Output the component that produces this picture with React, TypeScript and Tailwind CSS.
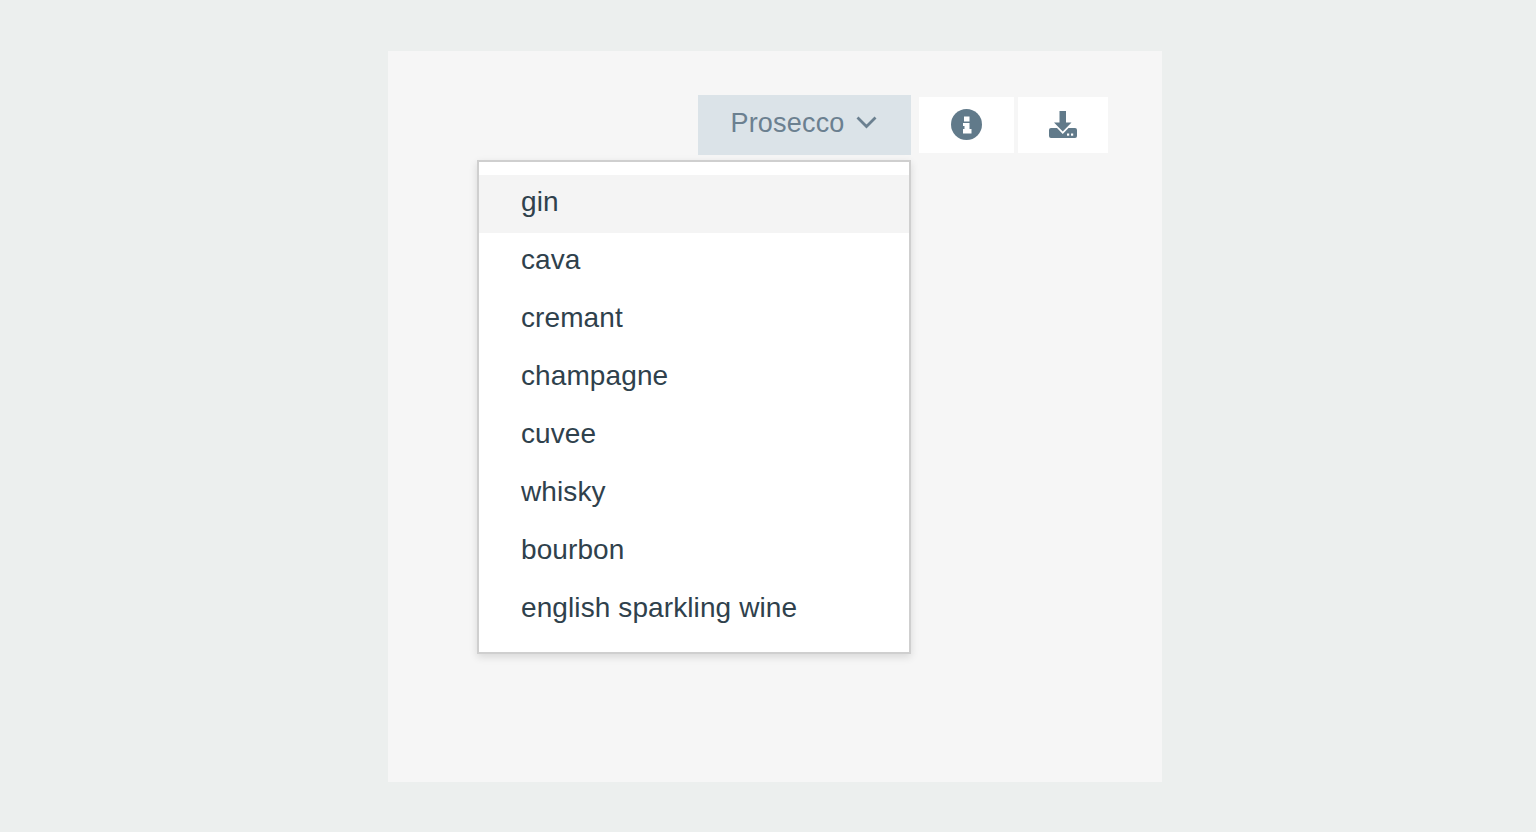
const items = ["gin", "cava", "cremant", "champagne", "cuvee", "whisky", "bourbon", "english sparkling wine"];

export default function App() {
  return (
    <div className="h-[832px] overflow-hidden bg-[#ecefee] pt-[51px] pl-[388px] font-['Liberation_Sans',Arial,sans-serif]">
      <div className="h-[731px] w-[774px] bg-[#f6f6f6] pt-[44px] pl-[310px]">
        <div className="relative flex w-[410px] items-center">
          <button className="flex h-[60px] w-[213px] items-center justify-center gap-[11px] bg-[#dbe3e8] pr-[2px] text-[27px] leading-none tracking-[0.2px] text-[#6b8090]">
            <span className="-mt-[4px]">Prosecco</span>
            <svg width="21" height="13" viewBox="0 0 21 13" fill="none" stroke="#6b8090" strokeWidth="2.8" className="-mt-[6px]">
              <path d="M1.5 1.5 L10.5 10.5 L19.5 1.5" />
            </svg>
          </button>
          <div className="ml-2 flex h-[56px] w-[95px] items-center justify-center bg-white">
            <svg width="31" height="31" viewBox="0 0 31 31" className="-mt-px">
              <circle cx="15.5" cy="15.5" r="15.5" fill="#617a8a" />
              <path d="M13 7.5h5.500v5h-5.500z M12 14h6.500v6h2v4.500H12V20h1.500v-3H12z" fill="#fff" />
            </svg>
          </div>
          <div className="ml-1 flex h-[56px] w-[90px] items-center justify-center bg-white">
            <svg width="28" height="28" viewBox="0 0 28 28" className="-mt-px">
              <path d="M10.5 0h6.500v11.500h5.500L13.750 20.500 5 11.500h5.500z" fill="#617a8a" />
              <path d="M2 17h6l5.750 6 5.750-6H26a2 2 0 0 1 2 2v6a2 2 0 0 1-2 2H2a2 2 0 0 1-2-2v-6a2 2 0 0 1 2-2z" fill="#617a8a" />
              <rect x="18" y="22.500" width="2.200" height="2.200" fill="#fff" />
              <rect x="22" y="22.500" width="2.200" height="2.200" fill="#fff" />
            </svg>
          </div>
          <div className="absolute top-[65px] -left-[221px] h-[494px] w-[434px] border-2 border-[#cfcfcf] bg-white pt-[13px] shadow-[0_3px_8px_rgba(0,0,0,0.12)]">
            {items.map((item, i) => (
              <div
                key={item}
                className={`flex h-[58px] items-center pl-[42px] text-[28px] leading-none tracking-[0.1px] text-[#2f414c] ${i === 0 ? "bg-[#f4f4f4]" : ""}`}
              >
                <span className="-mt-[4px]">{item}</span>
              </div>
            ))}
          </div>
        </div>
      </div>
    </div>
  );
}
